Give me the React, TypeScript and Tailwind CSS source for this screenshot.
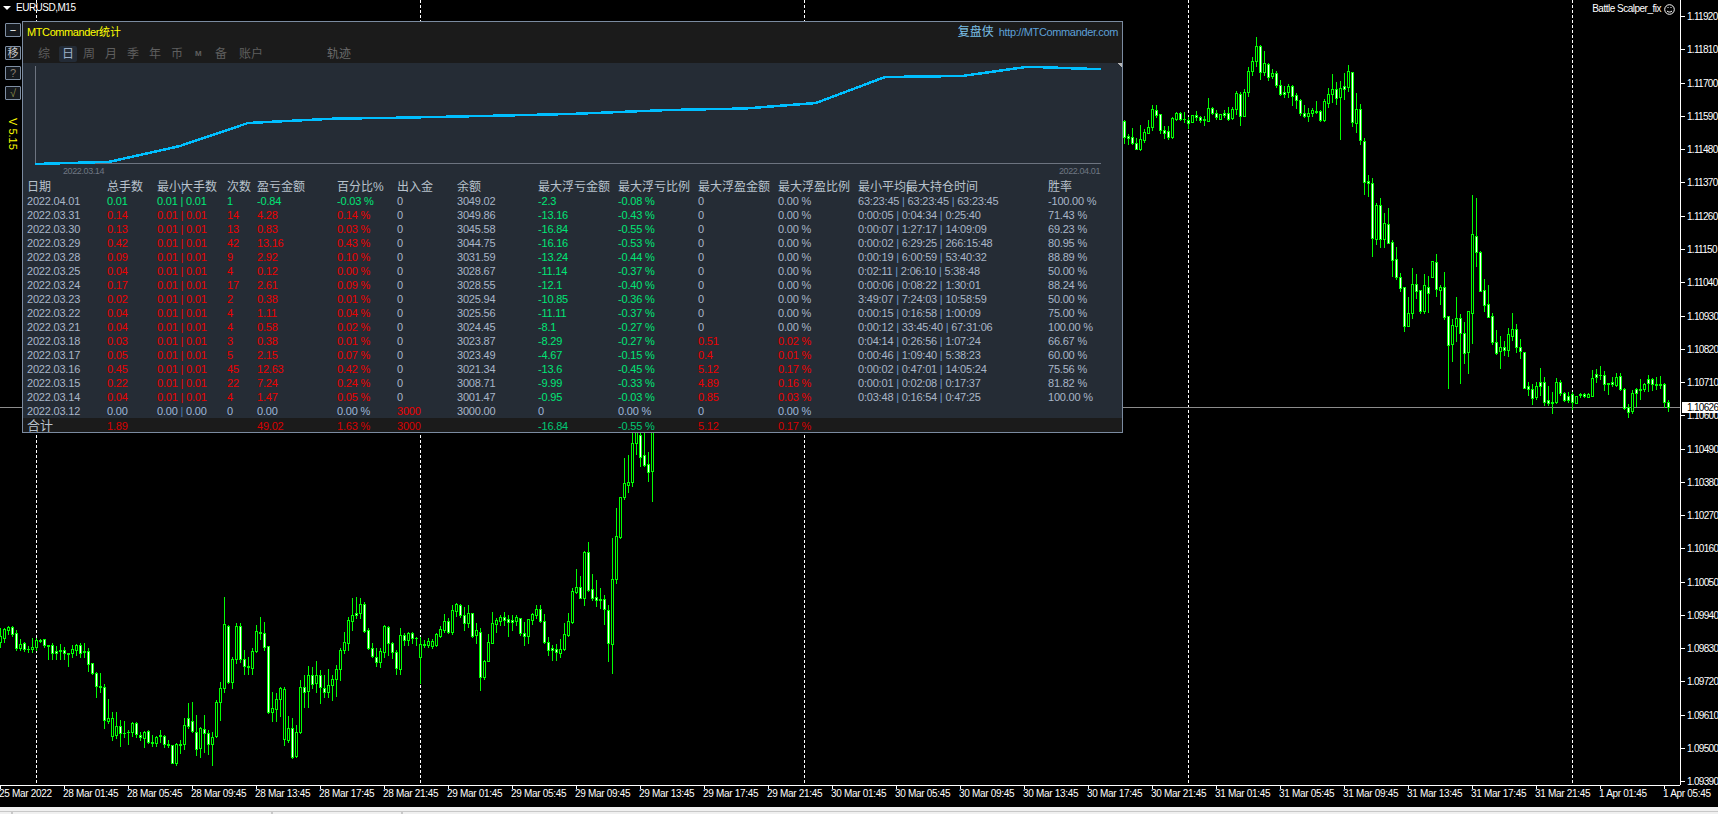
const font = "[font-family:'Liberation_Sans','Noto_Sans_CJK_SC',sans-serif]";

const GREEN = "text-[#00e676]";
const RED = "text-[#ee0000]";
const GREY = "text-[#a9b6c8]";
const BLUE = "text-[#9db6d8]";

// high, body top, body bottom, low, white body; y measured from each block's base
const blocks: [number, number, string][] = [
  [0, 600, "85,108,125,140,0 85,88,113,125,0 78,82,90,102,0 78,82,102,108,1 90,100,145,150,1 118,133,143,150,0 125,129,148,153,1 138,147,148,155,1 115,141,148,155,0 113,121,142,150,0 118,120,122,125,1 117,118,136,140,1 135,136,137,178,1 130,136,160,178,1 138,152,158,178,1 133,149,153,178,0 140,149,160,178,1 160,160,161,197,1 135,148,160,170,0 133,136,150,165,0 130,134,160,170,1 130,154,157,170,1 145,154,192,212,1 188,190,220,222,1 215,220,257,290,1 220,259,262,275,1 252,262,360,383,1 297,355,363,368,0 337,355,407,420,0 337,377,405,415,0 360,379,400,437,1 363,399,400,412,1 390,396,397,432,1 365,370,395,407,0 367,370,403,410,1 395,404,412,420,1 392,395,413,440,0 390,393,427,430,1 405,427,430,437,1 408,411,428,437,0 390,406,408,425,1 405,407,433,440,1 420,433,435,440,1 435,435,488,490,1 430,433,490,495,0 420,433,436,460,1 353,376,433,448,0 308,355,378,385,1 305,362,393,395,1 345,395,448,465,1 382,385,445,472,0 345,388,400,455,1 390,400,433,463,1 395,412,433,495,0 300,306,408,410,0 245,265,305,360,0 -9,73,265,275,0 75,79,245,248,1 170,178,245,263,0 68,79,176,190,0 68,79,178,185,1 150,178,199,222,1 170,198,202,222,1 145,154,205,222,0 75,94,152,155,0 52,95,100,118,1 65,100,140,150,1 138,139,335,338,1 275,325,335,362,0 280,298,326,362,0 262,265,298,348,0 262,267,418,435,0 348,385,420,425,0 355,385,470,475,1 375,397,468,472,0 240,262,395,398,0 225,262,277,320,1 198,226,274,320,0 200,226,251,265,1 183,224,250,277,0 210,226,262,308,1 225,265,275,290,1 207,256,275,292,0 225,238,255,300,0 195,206,238,288,0 145,149,206,240,0 95,127,150,160,0 50,61,130,150,0 -6,46,62,90,0 -9,40,45,55,1 -6,13,40,55,0 5,13,92,95,1 85,91,145,148,1 130,145,168,172,1 145,170,185,197,1 145,153,185,200,0 75,78,155,170,0 78,80,130,165,1 125,130,157,175,1 150,157,203,222,1 85,106,207,222,0 98,104,120,135,1 95,100,120,135,0 95,100,113,130,1 112,113,114,135,1 110,132,170,248,0 120,133,135,140,1 115,123,135,140,0 118,123,138,143,0 100,102,135,138,0 78,88,107,112,0 42,64,90,95,0 55,64,95,100,1"],
  [113, 420, "555,570,635,642,0 548,552,572,588,0 552,556,585,590,1 560,586,610,630,1 555,580,608,620,0 578,580,648,650,1 610,630,645,668,0 625,635,770,810,1 720,722,770,776,0 642,667,722,722,0 575,610,668,668,0 595,600,612,635,0 585,592,602,615,0 575,592,600,615,1 585,598,606,648,1 585,600,606,630,1 585,592,604,615,0 595,595,640,645,1 605,640,648,675,1 598,598,648,668,0 578,582,600,612,0 555,568,585,595,0 555,568,602,605,1 582,602,665,668,1 650,665,690,705,1 675,685,690,720,1 672,688,695,720,1 658,687,698,712,0 610,643,688,690,0 580,604,645,648,0 505,514,606,608,0 448,502,516,520,0 468,500,533,535,1 393,396,535,555,0 367,397,510,512,1 462,508,533,540,1 480,532,540,558,1 505,538,539,565,1 525,538,568,612,1 555,570,668,722,1 355,478,672,758,0 265,347,478,490,0 230,232,352,355,0 115,190,230,238,0 105,185,195,215,0 20,68,185,198,0 20,30,68,102,0 20,46,110,138,1 20,106,135,138,1 97,132,156,182,1 20,30,152,242,0"],
  [281, 30, "270,273,320,338,1 312,318,324,342,1 294,322,340,342,1 324,340,356,358,1 285,328,358,360,0 298,307,330,336,0 270,290,308,310,0 225,238,292,300,0 225,241,255,262,1 252,253,299,308,1 288,301,310,324,1 288,304,321,326,1 262,265,322,324,0 245,250,268,270,0 246,250,268,270,1 245,267,268,276,1 262,270,279,294,1 255,256,275,275,0 243,256,260,270,1 258,260,270,276,1 258,268,269,285,1 204,235,272,273,0 232,235,249,252,1 240,250,260,266,1 252,253,266,267,0 240,250,255,262,1 230,250,266,270,1 232,238,264,266,0 183,190,238,252,0 187,193,257,285,1 178,187,257,258,0 112,122,187,197,0 82,92,122,135,0 22,49,92,108,0 45,48,125,147,1 64,100,125,135,0 100,103,140,150,1 118,130,137,143,0 124,130,165,170,1 150,166,191,195,1 168,187,191,200,1 162,169,185,200,0 165,169,197,224,1 190,196,211,235,1 208,211,250,255,1 225,250,258,260,1 235,250,257,272,0 234,241,250,258,0 212,244,245,250,1 240,244,270,272,1 208,214,270,272,0 175,193,218,230,0 132,178,193,215,0 155,178,203,222,1 153,175,200,326,0 128,169,176,208,1 105,124,170,183,0 125,127,277,288,1 190,238,280,305,0 222,238,331,342,1 324,334,455,492,1"],
  [342, 160, "45,63,68,107,1 55,70,235,288,1 130,136,236,252,0 114,136,238,262,1 160,190,238,262,0 145,193,248,248,1 240,247,299,348,1 262,298,350,358,1 340,352,383,392,1 380,382,497,513,1 412,460,497,497,0 324,373,460,474,0 343,373,392,414,1 390,391,452,458,1 343,376,452,458,0 348,380,400,456,1 304,304,350,350,0 282,307,388,408,1 376,382,389,432,0 336,382,470,477,1 468,469,554,684,1 478,496,551,603,0 412,475,497,543,0 462,475,520,669,1 486,520,578,609,1 454,454,575,639,0 105,223,460,549,0 114,229,277,318,1 273,277,392,392,1 358,391,434,453,1 375,433,470,470,1 460,469,545,552,1 510,547,578,582,1 528,562,572,624,0 543,561,569,585,1 504,523,571,588,0 459,508,527,540,0 492,508,562,576,1 538,562,572,594,1 577,577,683,683,1"],
  [382, 340, "127,139,146,165,1 132,148,173,192,1 127,139,170,178,0 84,127,137,165,1 110,127,185,195,1 138,181,189,195,1 155,185,190,218,1 115,127,187,190,0 120,127,160,165,1 155,160,179,182,1 155,169,179,185,1 157,163,187,208,1 168,169,188,190,0 160,163,166,172,1 160,163,168,170,1 160,163,170,172,0 90,115,167,168,0 88,103,112,125,1 78,105,106,117,1 93,106,133,150,1 129,130,131,162,1 112,126,131,138,1 100,112,134,137,0 98,109,148,150,1 145,148,204,207,1 193,200,215,230,1 150,160,214,218,0 145,148,160,198,1 118,148,149,178,1 130,132,148,152,0 105,118,130,152,1 113,118,133,150,1 112,133,134,148,1 108,133,134,143,1 128,132,185,200,1 180,185,202,212,1"],
];

function candlePaths() {
  let green = "";
  let white = "";
  let black = "";
  for (const [start, base, text] of blocks) {
    text.split(" ").forEach((row, i) => {
      const [hi, top, bot, lo, fill] = row.split(",").map(Number);
      const x = (start + i) * 4;
      const h = Math.round(base + hi / 3);
      const t = Math.round(base + top / 3);
      const b = Math.round(base + bot / 3);
      const l = Math.round(base + lo / 3);
      green += `M${x} ${h}h1V${l + 1}h-1z`;
      green += `M${x - 1} ${t}h3V${b + 1}h-3z`;
      if (b - t >= 2) {
        const inner = `M${x} ${t + 1}h1V${b}h-1z`;
        if (fill) white += inner;
        else black += inner;
      }
    });
  }
  return { green, white, black };
}

const { green, white, black } = candlePaths();

const prices = ["1.11920", "1.11810", "1.11700", "1.11590", "1.11480", "1.11370", "1.11260", "1.11150", "1.11040", "1.10930", "1.10820", "1.10710", "1.10600", "1.10490", "1.10380", "1.10270", "1.10160", "1.10050", "1.09940", "1.09830", "1.09720", "1.09610", "1.09500", "1.09390"];

const times = ["25 Mar 2022", "28 Mar 01:45", "28 Mar 05:45", "28 Mar 09:45", "28 Mar 13:45", "28 Mar 17:45", "28 Mar 21:45", "29 Mar 01:45", "29 Mar 05:45", "29 Mar 09:45", "29 Mar 13:45", "29 Mar 17:45", "29 Mar 21:45", "30 Mar 01:45", "30 Mar 05:45", "30 Mar 09:45", "30 Mar 13:45", "30 Mar 17:45", "30 Mar 21:45", "31 Mar 01:45", "31 Mar 05:45", "31 Mar 09:45", "31 Mar 13:45", "31 Mar 17:45", "31 Mar 21:45", "1 Apr 01:45", "1 Apr 05:45"];

const tabs = ["综", "日", "周", "月", "季", "年", "币", "M", "备"];

const columns = "grid grid-cols-[80px_50px_70px_30px_80px_60px_60px_81px_80px_80px_80px_80px_190px_1fr] pl-[4px]";

type Row = [string, string, string, string, string, string, string, string, string, string, string, string];

const rows: Row[] = [
  ["2022.03.31", "0.14", "14", "4.28", "0.14 %", "3049.86", "-13.16", "-0.43 %", "0", "0.00 %", "0:00:05 | 0:04:34 | 0:25:40", "71.43 %"],
  ["2022.03.30", "0.13", "13", "0.83", "0.03 %", "3045.58", "-16.84", "-0.55 %", "0", "0.00 %", "0:00:07 | 1:27:17 | 14:09:09", "69.23 %"],
  ["2022.03.29", "0.42", "42", "13.16", "0.43 %", "3044.75", "-16.16", "-0.53 %", "0", "0.00 %", "0:00:02 | 6:29:25 | 266:15:48", "80.95 %"],
  ["2022.03.28", "0.09", "9", "2.92", "0.10 %", "3031.59", "-13.24", "-0.44 %", "0", "0.00 %", "0:00:19 | 6:00:59 | 53:40:32", "88.89 %"],
  ["2022.03.25", "0.04", "4", "0.12", "0.00 %", "3028.67", "-11.14", "-0.37 %", "0", "0.00 %", "0:02:11 | 2:06:10 | 5:38:48", "50.00 %"],
  ["2022.03.24", "0.17", "17", "2.61", "0.09 %", "3028.55", "-12.1", "-0.40 %", "0", "0.00 %", "0:00:06 | 0:08:22 | 1:30:01", "88.24 %"],
  ["2022.03.23", "0.02", "2", "0.38", "0.01 %", "3025.94", "-10.85", "-0.36 %", "0", "0.00 %", "3:49:07 | 7:24:03 | 10:58:59", "50.00 %"],
  ["2022.03.22", "0.04", "4", "1.11", "0.04 %", "3025.56", "-11.11", "-0.37 %", "0", "0.00 %", "0:00:15 | 0:16:58 | 1:00:09", "75.00 %"],
  ["2022.03.21", "0.04", "4", "0.58", "0.02 %", "3024.45", "-8.1", "-0.27 %", "0", "0.00 %", "0:00:12 | 33:45:40 | 67:31:06", "100.00 %"],
  ["2022.03.18", "0.03", "3", "0.38", "0.01 %", "3023.87", "-8.29", "-0.27 %", "0.51", "0.02 %", "0:04:14 | 0:26:56 | 1:07:24", "66.67 %"],
  ["2022.03.17", "0.05", "5", "2.15", "0.07 %", "3023.49", "-4.67", "-0.15 %", "0.4", "0.01 %", "0:00:46 | 1:09:40 | 5:38:23", "60.00 %"],
  ["2022.03.16", "0.45", "45", "12.63", "0.42 %", "3021.34", "-13.6", "-0.45 %", "5.12", "0.17 %", "0:00:02 | 0:47:01 | 14:05:24", "75.56 %"],
  ["2022.03.15", "0.22", "22", "7.24", "0.24 %", "3008.71", "-9.99", "-0.33 %", "4.89", "0.16 %", "0:00:01 | 0:02:08 | 0:17:37", "81.82 %"],
  ["2022.03.14", "0.04", "4", "1.47", "0.05 %", "3001.47", "-0.95", "-0.03 %", "0.85", "0.03 %", "0:03:48 | 0:16:54 | 0:47:25", "100.00 %"],
];

function Bars({ text, color }: { text: string; color: string }) {
  const parts = text.split(" | ");
  return (
    <span>
      {parts.map((part, i) => (
        <span key={i}>
          {i > 0 && <span className={color}> | </span>}
          {part}
        </span>
      ))}
    </span>
  );
}

function StatRow({ row }: { row: Row }) {
  const [date, lots, count, pl, pct, bal, loss, lossPct, win, winPct, hold, rate] = row;
  const winTone = win === "0" ? GREY : RED;
  return (
    <div className={`${columns} h-[14px] items-center leading-[14px] ${GREY}`}>
      <span>{date}</span>
      <span className={RED}>{lots}</span>
      <span className={RED}><Bars text="0.01 | 0.01" color={RED} /></span>
      <span className={RED}>{count}</span>
      <span className={RED}>{pl}</span>
      <span className={RED}>{pct}</span>
      <span>0</span>
      <span>{bal}</span>
      <span className={GREEN}>{loss}</span>
      <span className={GREEN}>{lossPct}</span>
      <span className={winTone}>{win}</span>
      <span className={winTone}>{winPct}</span>
      <span><Bars text={hold} color="text-[#6f9bd0]" /></span>
      <span>{rate}</span>
    </div>
  );
}

function SideButton({ label, tone }: { label: string; tone: string }) {
  return (
    <div className={`flex h-[14px] w-4 items-center justify-center rounded-[1px] border border-[#7f8fa3] bg-[#15191e] text-[11px] leading-none ${tone}`}>
      {label}
    </div>
  );
}

function Smiley() {
  return (
    <svg width="11" height="11" viewBox="0 0 11 11" fill="none" stroke="#ffffff" strokeWidth="1">
      <circle cx="5.5" cy="5.5" r="4.8" />
      <path d="M3 7c1.2 1.4 3.8 1.4 5 0" />
      <path d="M3.5 3.5h1M6.5 3.5h1" />
    </svg>
  );
}

function EquityChart() {
  return (
    <svg width="1099" height="103" viewBox="23 63 1099 103" className="block" shapeRendering="crispEdges">
      <path d="M35.5 66V163.5H1101" fill="none" stroke="#6d7480" strokeWidth="1" />
      <polyline
        fill="none"
        stroke="#00bfff"
        strokeWidth="2.5"
        points="35,164 104,162 110,161.7 180,146 248,123 293,120.7 333,118.7 400,117.7 482,116 570,114 668,110 745,108.5 816,103 885,77 923,76.5 962,76 1026,67 1046,67.3 1083,68.7 1101,69"
      />
      <path d="M1122 60v7l-4-3.500z" fill="#b5b5b5" />
    </svg>
  );
}

export default function App() {
  return (
    <div className={`flex h-[814px] w-[1718px] flex-col overflow-hidden bg-black ${font}`}>
      <div className="flex h-[785px]">
        <div className="relative h-[785px] w-[1680px]">
          <svg width="1680" height="785" className="block" shapeRendering="crispEdges">
            <path d="M36.500 0V785M420.500 0V785M804.500 0V785M1188.500 0V785M1572.500 0V785" stroke="#ffffff" strokeDasharray="3 2" />
            <path d="M0 407.500H1680" stroke="#8c8c8c" />
            <path d={green} fill="#00ff00" />
            <path d={white} fill="#ffffff" />
            <path d={black} fill="#000000" />
          </svg>

          <div className="absolute left-[3px] top-[2px] flex items-center gap-[5px] text-[10px] leading-[12px] tracking-[-0.5px] text-white">
            <span className="h-0 w-0 border-x-[4px] border-t-[4px] border-x-transparent border-t-white" />
            <span>EURUSD,M15</span>
          </div>

          <div className="absolute right-[5px] top-[3px] flex items-center gap-[3px] text-[10px] leading-[12px] tracking-[-0.5px] text-white">
            <span>Battle Scalper_fix</span>
            <Smiley />
          </div>

          <div className="absolute left-[5px] top-[23px] flex flex-col items-center">
            <SideButton label="−" tone="text-white" />
            <div className="mt-[9px] flex flex-col gap-[6px]">
              <SideButton label="移" tone="text-[#c8c8c8]" />
              <SideButton label="?" tone="text-[#8a7f70]" />
              <SideButton label="√" tone="text-[#8d8d4a]" />
            </div>
            <span className="mt-[18px] text-[11px] leading-[12px] text-[#ffff00] [writing-mode:vertical-rl]">V 5.15</span>
          </div>

          {/* stats window */}
          <div className="absolute left-[22px] top-[21px] flex h-[412px] w-[1101px] flex-col border border-[#7b8ba0] bg-[#252c35] text-[11px] tracking-[-0.2px]">
            <div className="h-[41px] bg-[#1b1b1b]">
              <div className="flex h-[20px] items-center justify-between pl-[4px] pr-[4px]">
                <span className="tracking-[-0.4px] text-[#ffff00]">MTCommander<span className="tracking-normal">统计</span></span>
                <span className="flex items-center gap-[5px] text-[#5da0d8]">
                  <span className="text-[12px] tracking-normal text-[#7cc0e8]">复盘侠</span>
                  <span className="tracking-[-0.36px]">http://MTCommander.com</span>
                </span>
              </div>
              <div className="ml-[15px] mt-[4px] flex h-[16px] items-center text-[12px] tracking-normal text-[#5f5f5f]">
                {tabs.map((t) =>
                  t === "日" ? (
                    <span key={t} className="-ml-px mr-[6px] flex h-[16px] w-[18px] items-center justify-center rounded-[2px] bg-[#232b36] text-[#9db0c8]">{t}</span>
                  ) : (
                    <span key={t} className={t === "M" ? "w-[22px] pl-[2px] text-[8px] font-bold" : "w-[22px]"}>{t}</span>
                  ),
                )}
                <span className="w-[90px] pl-[2px]">账户</span>
                <span className="text-[#6b6b6b]">轨迹</span>
              </div>
            </div>

            <EquityChart />
            <div className="flex h-[14px] justify-between pl-[40px] pr-[22px] text-[9px] leading-[10px] tracking-[-0.4px] text-[#6f7783]">
              <span>2022.03.14</span>
              <span>2022.04.01</span>
            </div>

            <div className={`${columns} h-[14px] items-center text-[12px] leading-[14px] tracking-normal text-[#b8c2cc]`}>
              <span>日期</span>
              <span>总手数</span>
              <span>最小<span className="inline-block w-0 text-[#6f9bd0]">|</span>大手数</span>
              <span>次数</span>
              <span>盈亏金额</span>
              <span>百分比%</span>
              <span>出入金</span>
              <span>余额</span>
              <span>最大浮亏金额</span>
              <span>最大浮亏比例</span>
              <span>最大浮盈金额</span>
              <span>最大浮盈比例</span>
              <span>最小平均<span className="inline-block w-0">|</span>最大持仓时间</span>
              <span>胜率</span>
            </div>

            <div className={`${columns} h-[14px] items-center leading-[14px] ${GREY}`}>
              <span>2022.04.01</span>
              <span className={GREEN}>0.01</span>
              <span className={GREEN}>0.01 | 0.01</span>
              <span className={GREEN}>1</span>
              <span className={GREEN}>-0.84</span>
              <span className={GREEN}>-0.03 %</span>
              <span>0</span>
              <span>3049.02</span>
              <span className={GREEN}>-2.3</span>
              <span className={GREEN}>-0.08 %</span>
              <span>0</span>
              <span>0.00 %</span>
              <span><Bars text="63:23:45 | 63:23:45 | 63:23:45" color="text-[#6f9bd0]" /></span>
              <span>-100.00 %</span>
            </div>

            {rows.map((row) => (
              <StatRow key={row[0]} row={row} />
            ))}

            <div className={`${columns} h-[14px] items-center leading-[14px] ${BLUE}`}>
              <span className={GREY}>2022.03.12</span>
              <span>0.00</span>
              <span><Bars text="0.00 | 0.00" color="text-[#4a7bb0]" /></span>
              <span>0</span>
              <span>0.00</span>
              <span>0.00 %</span>
              <span className={RED}>3000</span>
              <span className={GREY}>3000.00</span>
              <span>0</span>
              <span>0.00 %</span>
              <span>0</span>
              <span>0.00 %</span>
            </div>

            <div className={`${columns} h-[14px] items-center bg-[#1b1b1b] pt-px leading-[14px]`}>
              <span className="text-[13px] tracking-normal text-[#b8c2cc]">合计</span>
              <span className="text-[#d80000]">1.89</span>
              <span />
              <span />
              <span className="text-[#d80000]">49.02</span>
              <span className="text-[#d80000]">1.63 %</span>
              <span className="text-[#d80000]">3000</span>
              <span />
              <span className="text-[#00c875]">-16.84</span>
              <span className="text-[#00c875]">-0.55 %</span>
              <span className="text-[#d80000]">5.12</span>
              <span className="text-[#d80000]">0.17 %</span>
            </div>
          </div>
        </div>

        <div className="relative w-[38px] overflow-hidden border-l border-white text-[10px] tracking-[-0.7px] text-white">
          {prices.map((p) => (
            <div key={p} className="flex h-[33.27px] items-center gap-[2px] whitespace-nowrap">
              <span className="h-px w-[4px] shrink-0 bg-white" />
              <span>{p}</span>
            </div>
          ))}
          <div className="absolute left-px right-0 top-[402px] h-[11px] bg-white pl-[5px] leading-[11px] text-black">1.10626</div>
        </div>
      </div>

      <div className="flex h-[22px] w-[1680px] border-t border-white text-[10px] leading-[10px] tracking-[-0.3px] text-white">
        {times.map((t) => (
          <div key={t} className="w-16 shrink-0 whitespace-nowrap">
            <div className="h-[3px] w-px bg-white" />
            <div className="-ml-px">{t}</div>
          </div>
        ))}
      </div>

      <div className="flex flex-1 flex-col bg-[#f0f0f0]">
        <div className="mt-[4px] h-px bg-[#c8c8c8]" />
        <div className="mt-auto flex">
          <span className="ml-[11px] h-[2px] w-[2px] bg-[#c8c8c8]" />
          <span className="ml-[258px] h-[2px] w-[2px] bg-[#c8c8c8]" />
          <span className="ml-[128px] h-[2px] w-[2px] bg-[#c8c8c8]" />
        </div>
      </div>
    </div>
  );
}
